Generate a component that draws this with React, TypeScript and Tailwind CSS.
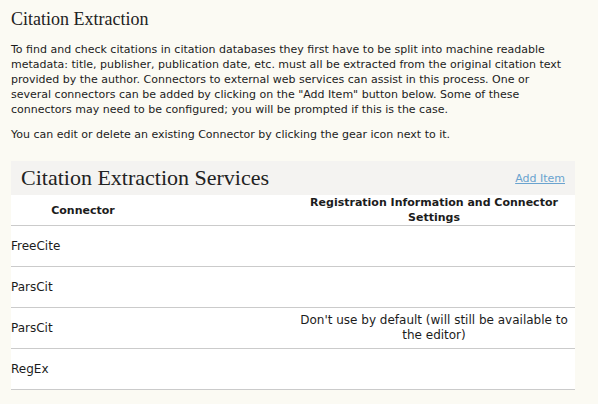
export default function App() {
  const rows = [
    { name: "FreeCite", settings: "" },
    { name: "ParsCit", settings: "" },
    { name: "ParsCit", settings: "Don't use by default (will still be available to the editor)" },
    { name: "RegEx", settings: "" },
  ];

  return (
    <div className="min-h-[404px] bg-[#fbfaf3] pl-[11px] pr-[23px] pt-[8px] text-[#1c1c1c] font-['DejaVu_Sans',Verdana,sans-serif]">
      <h2 className="text-[18px] leading-[22px] font-[family-name:'Liberation_Serif',Georgia,serif] text-[#222]">Citation Extraction</h2>

      <p className="mt-[12px] pr-[10px] text-[11px] leading-[15px]">
        To find and check citations in citation databases they first have to be split into machine readable metadata: title, publisher, publication date, etc. must all be extracted from the original citation text provided by the author. Connectors to external web services can assist in this process. One or several connectors can be added by clicking on the "Add Item" button below. Some of these connectors may need to be configured; you will be prompted if this is the case.
      </p>
      <p className="mt-[10px] text-[11px] leading-[15px]">
        You can edit or delete an existing Connector by clicking the gear icon next to it.
      </p>

      <div className="mt-[19px] bg-white">
        <div className="flex items-center justify-between h-[34px] bg-[#f4f3f1] pl-[10px] pr-[10px]">
          <h3 className="text-[22px] leading-[26px] font-[family-name:'Liberation_Serif',Georgia,serif] text-[#222]">Citation Extraction Services</h3>
          <a href="#" className="text-[11px] underline text-[#6aa3cf] mt-[2px]">Add Item</a>
        </div>

        <div className="grid grid-cols-[144px_1fr_282px] h-[31px] items-center border-b border-[#cbcbcb] text-[11px] leading-[15px] font-bold">
          <div className="text-center">Connector</div>
          <div></div>
          <div className="text-center px-[8px]">Registration Information and Connector Settings</div>
        </div>

        {rows.map((r, i) => (
          <div key={i} className="grid grid-cols-[144px_1fr_282px] h-[41px] items-center border-b border-[#cbcbcb] text-[12px] leading-[15px]">
            <div>{r.name}</div>
            <div></div>
            <div className="text-center px-[6px]">{r.settings}</div>
          </div>
        ))}
      </div>
    </div>
  );
}
